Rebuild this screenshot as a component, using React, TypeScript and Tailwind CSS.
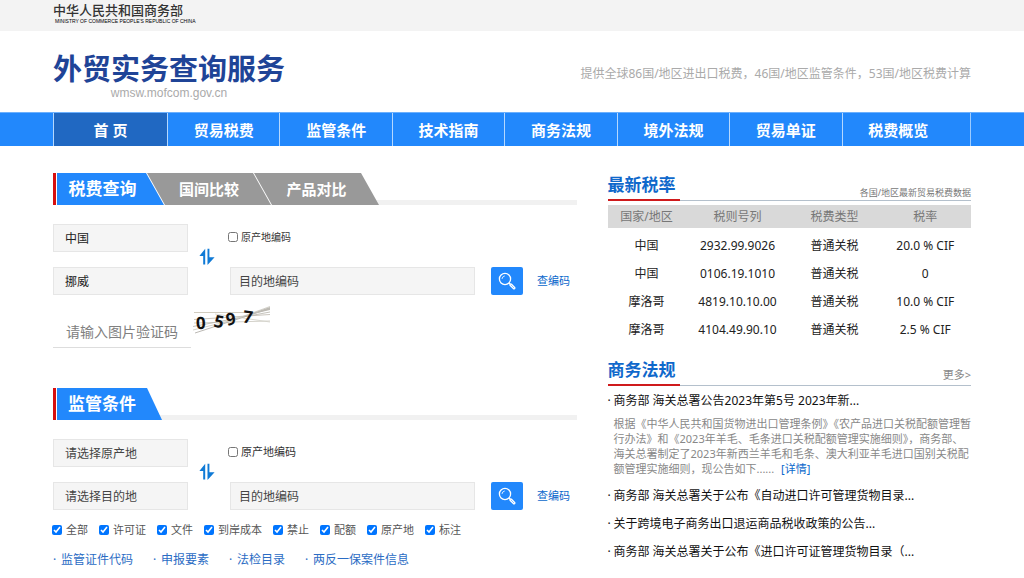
import { useState } from "react";
import clsx from "clsx";

const NAV_ITEMS = ["首 页", "贸易税费", "监管条件", "技术指南", "商务法规", "境外法规", "贸易单证", "税费概览"];

const RATES = [
  { country: "中国", code: "2932.99.9026", type: "普通关税", rate: "20.0 % CIF" },
  { country: "中国", code: "0106.19.1010", type: "普通关税", rate: "0" },
  { country: "摩洛哥", code: "4819.10.10.00", type: "普通关税", rate: "10.0 % CIF" },
  { country: "摩洛哥", code: "4104.49.90.10", type: "普通关税", rate: "2.5 % CIF" },
];

const SUMMARY = [
  "根据《中华人民共和国货物进出口管理条例》《农产品进口关税配额管理暂",
  "行办法》和《2023年羊毛、毛条进口关税配额管理实施细则》，商务部、",
  "海关总署制定了2023年新西兰羊毛和毛条、澳大利亚羊毛进口国别关税配",
];

const LAWS = [
  "商务部 海关总署关于公布《自动进口许可管理货物目录...",
  "关于跨境电子商务出口退运商品税收政策的公告...",
  "商务部 海关总署关于公布《进口许可证管理货物目录（...",
];

const FILTERS = ["全部", "许可证", "文件", "到岸成本", "禁止", "配额", "原产地", "标注"];

const QUICK_LINKS = ["监管证件代码", "申报要素", "法检目录", "两反一保案件信息"];

const fieldClass =
  "h-7 w-full border border-[#e6e6e6] bg-[#f5f5f5] text-[12px] text-[#222] outline-none placeholder:text-[#444] placeholder:opacity-100";

function SwapIcon() {
  return (
    <svg width="16" height="18" viewBox="0 0 16 18" fill="#0f7ad6" aria-hidden="true">
      <path d="M6.2 0.8V16.6H4.2V8H0.4Z" />
      <path d="M8.5 0.8H10.4V9.2H15.6L8.5 17Z" />
    </svg>
  );
}

function SearchIcon() {
  return (
    <svg width="18" height="18" viewBox="0 0 18 18" fill="none" stroke="#fff" strokeLinecap="round" aria-hidden="true">
      <circle cx="7" cy="7" r="5.6" strokeWidth="1.3" />
      <path d="M4 6.6A3 3 0 0 1 6.4 4" strokeWidth="0.8" />
      <path d="M11.2 11.2L12.4 12.4" strokeWidth="1.2" />
      <path d="M12.9 12.9L16 16" strokeWidth="3" />
      <path d="M13.1 13.1L15.8 15.8" stroke="#8ec2ff" strokeWidth="1" />
    </svg>
  );
}

function Captcha() {
  return (
    <svg width="78" height="32" viewBox="0 0 78 32" role="img" aria-label="验证码">
      <g fill="none" strokeWidth="0.8">
        <path d="M1 7.5H60" stroke="#c5bfae" />
        <path d="M1 14.5L77 9.5" stroke="#bcb8ad" />
        <path d="M1 18L77 16" stroke="#c9c6bd" />
        <path d="M0 21.5L77 7" stroke="#b5b2aa" />
        <path d="M2 28L77 3.5" stroke="#a9a69f" />
        <path d="M0 25L40 15L77 1.5" stroke="#c9c6bd" />
        <path d="M22 9L77 17" stroke="#d2d0c8" />
        <path d="M48 12L77 5V2Z" fill="#bdbab3" stroke="none" />
      </g>
      <g fill="#111" fontFamily="'Noto Sans', sans-serif" fontWeight="700" fontSize="17">
        <text x="3" y="24" transform="rotate(-3 8 18)">0</text>
        <text x="21" y="23" transform="rotate(12 27 17)">5</text>
        <text x="33" y="20" transform="rotate(-10 38 14)">9</text>
        <text x="50" y="18" transform="rotate(8 55 12)">7</text>
      </g>
    </svg>
  );
}

const TABS = [
  { label: "税费查询", shape: "w-[107px] pr-4 [clip-path:polygon(0_0,89px_0,100%_100%,0_100%)]" },
  { label: "国间比较", shape: "-ml-[17px] w-[124px] [clip-path:polygon(0_0,106px_0,100%_100%,18px_100%)]" },
  { label: "产品对比", shape: "-ml-[17px] w-[125px] [clip-path:polygon(0_0,107px_0,100%_100%,18px_100%)]" },
];

function TabBar({ children }: { children: React.ReactNode }) {
  return (
    <div className="flex h-8 items-end">
      <div className="mr-px h-8 w-[3px] shrink-0 bg-[#d7100f]" />
      {children}
      <div className="-ml-1 h-[5px] flex-1 bg-[#f1f1f1]" />
    </div>
  );
}

interface QueryFormProps {
  id: string;
  origin?: string;
  destination?: string;
  labelSize: string;
}

function QueryForm({ id, origin, destination, labelSize }: QueryFormProps) {
  return (
    <div className="mt-[19px] flex">
      <div className="flex w-[135px] shrink-0 flex-col gap-[15px]">
        <input className={clsx(fieldClass, "px-[11px]")} defaultValue={origin} placeholder="请选择原产地" aria-label="原产地" />
        <input className={clsx(fieldClass, "px-[11px]")} defaultValue={destination} placeholder="请选择目的地" aria-label="目的地" />
      </div>
      <button type="button" aria-label="互换" className="w-[42px] shrink-0 self-center pr-1 pb-[6px]">
        <span className="flex justify-center">
          <SwapIcon />
        </span>
      </button>
      <div className="flex flex-1 flex-col gap-[15px]">
        <div className="flex h-7 items-center pb-[2px]">
          <input type="checkbox" id={`${id}-origin-code`} className="-ml-0.5 size-[10px]" />
          <label htmlFor={`${id}-origin-code`} className={clsx("ml-[3px] leading-4 text-[#333]", labelSize)}>
            原产地编码
          </label>
        </div>
        <div className="flex items-center">
          <input className={clsx(fieldClass, "max-w-[245px] px-2")} placeholder="目的地编码" aria-label="目的地编码" />
          <button type="button" aria-label="查询" className="ml-4 flex h-7 w-8 shrink-0 items-center justify-center rounded-[2px] bg-[#2288fc]">
            <SearchIcon />
          </button>
          <a href="#codes" className="ml-[14px] shrink-0 text-[11px] leading-4 text-[#0a68cc]">
            查编码
          </a>
        </div>
      </div>
    </div>
  );
}

function SectionTitle({ title, children }: { title: string; children: React.ReactNode }) {
  return (
    <div className="flex h-7 items-stretch justify-between">
      <h2 className="w-[72px] border-b-2 border-[#cf1a1c] text-[17px] leading-6 font-bold whitespace-nowrap text-[#0f68cb]">{title}</h2>
      <div className="flex flex-1 items-end justify-end border-b border-[#b4c0cc]">{children}</div>
    </div>
  );
}

function LawItem({ text }: { text: string }) {
  return (
    <a href="#law" className="flex h-7 items-center pt-[2px] text-[12px] whitespace-nowrap text-[#111]">
      <span className="w-[6px]">·</span>
      {text}
    </a>
  );
}

export default function App() {
  const [activeTab, setActiveTab] = useState(0);

  return (
    <div className="min-h-screen bg-white font-['Noto_Sans','Noto_Sans_CJK_SC',sans-serif] text-[12px] leading-4">
      {/* Ministry bar */}
      <div className="h-[31px] bg-[#f3f3f3]">
        <div className="mx-auto max-w-[918px] pt-[2px] text-[#333]">
          <p className="text-[13px] leading-4 font-medium">中华人民共和国商务部</p>
          <p className="pl-0.5 font-['Liberation_Sans',sans-serif] text-[5px] leading-[6px] text-black">
            MINISTRY OF COMMERCE PEOPLE'S REPUBLIC OF CHINA
          </p>
        </div>
      </div>

      <header className="mx-auto flex h-[81px] max-w-[918px] items-start justify-between">
        <div className="pt-[22px]">
          <h1 className="text-[29px] leading-8 font-bold text-[#1f4497]">外贸实务查询服务</h1>
          <p className="text-center font-['Liberation_Sans',sans-serif] text-[12px] leading-4 text-[#aaa]">wmsw.mofcom.gov.cn</p>
        </div>
        <p className="pt-[35px] text-[12px] text-[#aaa]">提供全球86国/地区进出口税费，46国/地区监管条件，53国/地区税费计算</p>
      </header>

      <nav className="border-t border-[#6cb0fd] bg-[#2288fc]">
        <div className="mx-auto flex h-[33px] max-w-[918px] border-r border-[#9ccbff] pr-4">
          {NAV_ITEMS.map((item, i) => (
            <a
              key={item}
              href="#nav"
              className={clsx(
                "flex items-center justify-center border-l border-[#b5d8ff] text-[15px] font-bold text-white",
                i === 0 ? "w-[114px] shrink-0 bg-[#2068c2]" : "flex-1"
              )}
            >
              {item}
            </a>
          ))}
        </div>
      </nav>

      <main className="mx-auto grid max-w-[918px] grid-cols-[524fr_363fr] gap-x-[31px] pt-[27px]">
        <div>
          <TabBar>
            {TABS.map((tab, i) => (
              <button
                key={tab.label}
                type="button"
                onClick={() => setActiveTab(i)}
                className={clsx(
                  "h-8 shrink-0 font-bold text-white",
                  tab.shape,
                  i === 0 ? "text-[17px]" : "text-[15px]",
                  i === activeTab ? "bg-[#2288fc]" : "bg-[#999]"
                )}
              >
                {tab.label}
              </button>
            ))}
          </TabBar>
          <QueryForm id="tax" origin="中国" destination="挪威" labelSize="text-[10px]" />
          <div className="mt-[10px] flex h-[43px] items-start gap-[2px]">
            <input
              className="mt-[10px] h-[33px] w-[138px] border-b border-[#ddd] pl-[13px] text-[14px] outline-none placeholder:text-[#808080] placeholder:opacity-100"
              placeholder="请输入图片验证码"
              aria-label="请输入图片验证码"
            />
            <Captcha />
          </div>

          <div className="mt-10">
            <TabBar>
              <h2 className="h-8 w-[105px] shrink-0 bg-[#2288fc] pl-[11px] text-[17px] leading-8 font-bold text-white [clip-path:polygon(0_0,90px_0,100%_100%,0_100%)]">
                监管条件
              </h2>
            </TabBar>
            <QueryForm id="rule" labelSize="text-[11px]" />
          </div>

          <div className="mt-3 -ml-px flex gap-[11px]">
            {FILTERS.map((name) => (
              <label key={name} className="flex items-center gap-1 text-[11px] leading-4 whitespace-nowrap text-[#555]">
                <input type="checkbox" defaultChecked className="size-[10px]" />
                {name}
              </label>
            ))}
          </div>

          <div className="mt-[14px] flex gap-5">
            {QUICK_LINKS.map((name) => (
              <a key={name} href="#quick" className="flex text-[12px] whitespace-nowrap text-[#2b6cc4]">
                <span className="w-2">·</span>
                {name}
              </a>
            ))}
          </div>
        </div>

        <div>
          <SectionTitle title="最新税率">
            <span className="text-[9px] leading-[14px] text-[#777]">各国/地区最新贸易税费数据</span>
          </SectionTitle>
          <table className="mt-1 w-full table-fixed text-center">
            <thead>
              <tr className="h-[23px] bg-[#d9d9d9] text-[#777]">
                <th className="w-[78px] font-normal">国家/地区</th>
                <th className="w-[104px] font-normal">税则号列</th>
                <th className="w-[90px] font-normal">税费类型</th>
                <th className="font-normal">税率</th>
              </tr>
            </thead>
            <tbody className="text-[#222] before:block before:h-1">
              {RATES.map((row) => (
                <tr key={row.code} className="h-7">
                  <td>{row.country}</td>
                  <td>{row.code}</td>
                  <td>{row.type}</td>
                  <td>{row.rate}</td>
                </tr>
              ))}
            </tbody>
          </table>

          <div className="mt-[14px]">
            <SectionTitle title="商务法规">
              <a href="#more" className="text-[11px] leading-5 text-[#888]">
                更多&gt;
              </a>
            </SectionTitle>
            <LawItem text="商务部 海关总署公告2023年第5号 2023年新..." />
            <p className="mt-0.5 mb-[5px] pl-[6px] text-[11px] leading-[15px] text-[#888]">
              {SUMMARY.map((line) => (
                <span key={line} className="block whitespace-nowrap">
                  {line}
                </span>
              ))}
              额管理实施细则，现公告如下......{" "}
              <a href="#detail" className="ml-1 text-[#0a68cc]">
                [详情]
              </a>
            </p>
            {LAWS.map((law) => (
              <LawItem key={law} text={law} />
            ))}
          </div>
        </div>
      </main>
    </div>
  );
}
